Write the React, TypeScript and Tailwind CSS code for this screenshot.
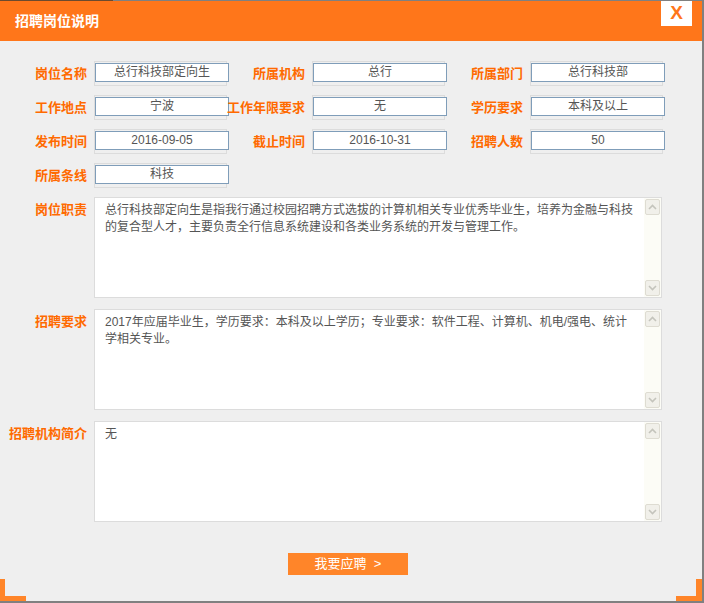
const fieldRows: [string, string][][] = [
  [
    ["岗位名称", "总行科技部定向生"],
    ["所属机构", "总行"],
    ["所属部门", "总行科技部"],
  ],
  [
    ["工作地点", "宁波"],
    ["工作年限要求", "无"],
    ["学历要求", "本科及以上"],
  ],
  [
    ["发布时间", "2016-09-05"],
    ["截止时间", "2016-10-31"],
    ["招聘人数", "50"],
  ],
  [["所属条线", "科技"]],
];

const textBlocks = [
  {
    label: "岗位职责",
    text: "总行科技部定向生是指我行通过校园招聘方式选拔的计算机相关专业优秀毕业生，培养为金融与科技的复合型人才，主要负责全行信息系统建设和各类业务系统的开发与管理工作。",
  },
  {
    label: "招聘要求",
    text: "2017年应届毕业生，学历要求：本科及以上学历；专业要求：软件工程、计算机、机电/强电、统计学相关专业。",
  },
  { label: "招聘机构简介", text: "无" },
];

const Label = ({ text, top }: { text: string; top?: boolean }) => (
  <div
    className={
      "flex justify-end whitespace-nowrap text-[13px] font-bold text-[#ff6a00] " +
      (top ? "items-start pt-[3px]" : "items-center")
    }
  >
    {text}
  </div>
);

const Field = ({ value }: { value: string }) => (
  <div className="w-[133px] h-[25px] border border-[#dcdcdc]">
    <div className="mt-[1px] w-[134px] h-[19px] border border-[#7f9db9] bg-white text-center text-[12px] leading-[17px] text-[#555]">
      {value}
    </div>
  </div>
);

const Arrow = ({ up }: { up?: boolean }) => (
  <div className="w-[15px] h-[16px] rounded-[2px] border border-[#dedcd2] bg-[#f1f0ea] flex items-center justify-center">
    <svg width="9" height="6" viewBox="0 0 9 6">
      <path
        d={up ? "M1 5 L4.5 1.5 L8 5" : "M1 1 L4.5 4.5 L8 1"}
        fill="none"
        stroke="#c4c4bc"
        strokeWidth="1.6"
      />
    </svg>
  </div>
);

const TextBox = ({ label, text }: { label: string; text: string }) => (
  <div className="grid grid-cols-[87px_568px] gap-x-[7px]">
    <Label text={label} top />
    <div className="h-[101px] border border-[#dcdcdc] bg-white flex">
      <div className="flex-1 pl-[10px] pr-[8px] pt-[4px] text-[12px] leading-[17px] text-[#555]">
        {text}
      </div>
      <div className="w-[17px] p-[1px] bg-[#fcfcf6] flex flex-col justify-between">
        <Arrow up />
        <Arrow />
      </div>
    </div>
  </div>
);

export default function App() {
  return (
    <div
      className="w-[704px] h-[603px] bg-[#808080] overflow-hidden"
      style={{ fontFamily: '"Liberation Sans", "Noto Sans CJK SC", sans-serif' }}
    >
      <div className="flex h-[1px]">
        <div className="w-[113px] bg-[#6b4a2e]" />
        <div className="flex-1 bg-[#808080]" />
      </div>
      <div className="w-[702px] h-[600px] bg-[#efefef] flex flex-col">
        <div className="h-[40px] bg-[#ff761a] flex justify-between">
          <div className="pl-[15px] flex items-center text-[14px] font-bold text-white">
            招聘岗位说明
          </div>
          <div className="mr-[10px] w-[31px] h-[25px] bg-white flex items-center justify-center text-[19px] font-bold text-[#ff761a]">
            X
          </div>
        </div>

        <div className="pt-[20px] grid grid-cols-[87px_133px_71px_133px_71px_133px] gap-x-[7px] gap-y-[9px]">
          {fieldRows.map((row, i) =>
            row.map(([label, value]) => (
              <div key={i + label} className="contents">
                <Label text={label} />
                <Field value={value} />
              </div>
            ))
          )}
        </div>

        <div className="mt-[9px] flex flex-col gap-[11px]">
          {textBlocks.map((b) => (
            <TextBox key={b.label} label={b.label} text={b.text} />
          ))}
        </div>

        <div className="mt-[31px] ml-[288px] w-[120px] h-[22px] bg-[#ff8529] flex items-center justify-center text-[13px] text-white">
          我要应聘&nbsp;&nbsp;&gt;
        </div>

        <div className="mt-auto flex justify-between h-[22px]">
          <div className="w-[26px] h-[22px] border-l-[5px] border-b-[5px] border-[#ff8529]" />
          <div className="w-[26px] h-[22px] border-r-[6px] border-b-[5px] border-[#ff8529]" />
        </div>
      </div>
    </div>
  );
}
